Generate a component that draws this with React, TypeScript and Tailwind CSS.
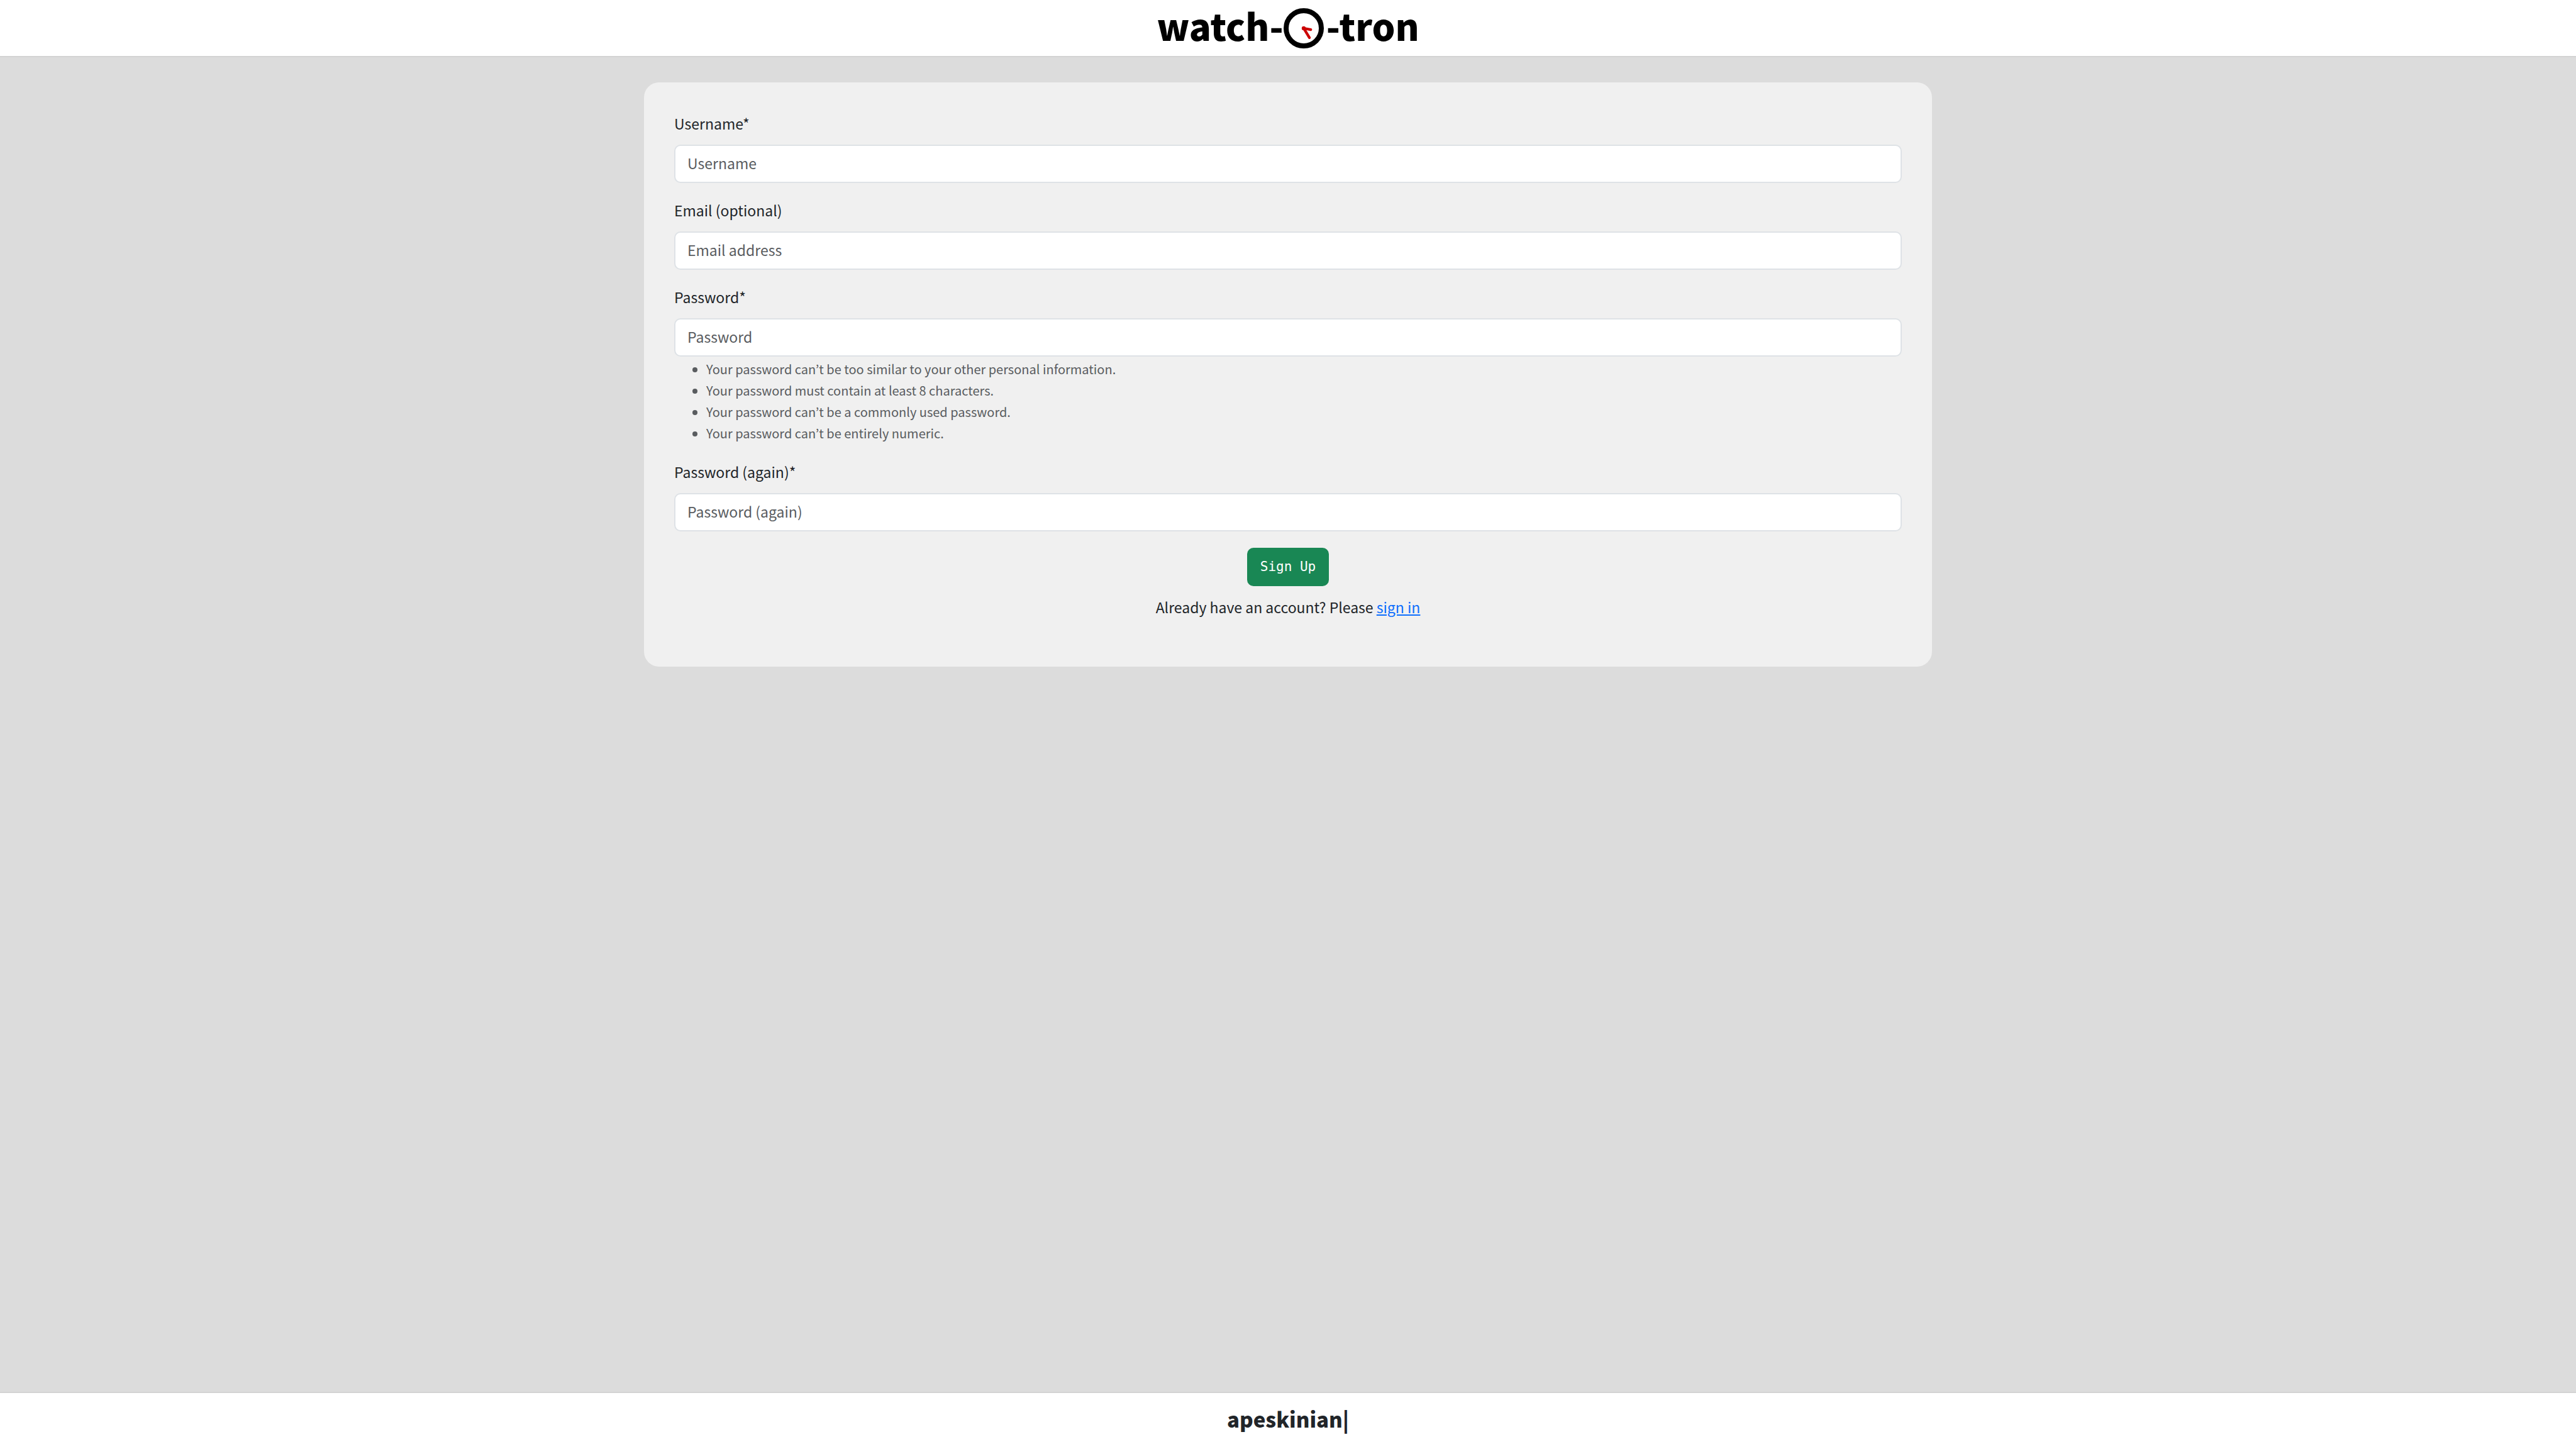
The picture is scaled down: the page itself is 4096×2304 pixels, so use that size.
import type { ReactNode } from "react";

type FieldProps = {
  id: string;
  label: string;
  placeholder: string;
  type: string;
  required?: boolean;
  children?: ReactNode;
};

const passwordRules = [
  "Your password can’t be too similar to your other personal information.",
  "Your password must contain at least 8 characters.",
  "Your password can’t be a commonly used password.",
  "Your password can’t be entirely numeric.",
];

function Field({ id, label, placeholder, type, required, children }: FieldProps) {
  return (
    <div className="mb-[26px] flex flex-col">
      <label htmlFor={id} className="mb-[17px] self-start leading-[34px]">
        {label}
        {required && "*"}
      </label>
      <input
        id={id}
        name={id}
        type={type}
        placeholder={placeholder}
        className="h-[61px] w-full rounded-[10px] border-2 border-[#dee2e6] bg-white px-[19px] pb-1 placeholder:text-[#595c5f]"
      />
      {children}
    </div>
  );
}

function Logo() {
  return (
    <a href="#" className="flex items-start text-[58px] leading-[54px] font-black text-black">
      <span>watch-</span>
      <svg viewBox="0 0 80 80" className="mr-1 size-16" fill="none" aria-hidden="true">
        <circle cx="40" cy="40" r="35" stroke="#000" strokeWidth="10" />
        <circle cx="40" cy="40" r="4" fill="#c00" />
        <path d="M40 40L54 42.7M40 40L51.3 58.6" stroke="#c00" strokeWidth="5.4" strokeLinecap="round" />
      </svg>
      <span>-tron</span>
    </a>
  );
}

export default function App() {
  return (
    <div className="flex min-h-screen flex-col bg-[#dcdcdc] font-['Noto_Sans_CJK_KR',sans-serif] text-[23px] text-[#212529]">
      <header className="flex h-[91px] items-center justify-center border-b-2 border-[#d3d3d3] bg-white">
        <Logo />
      </header>

      <main className="flex-1 pt-10">
        <form className="mx-auto w-1/2 rounded-3xl bg-[#f0f0f0] px-12 pt-12 pb-[78px]">
          <Field id="username" label="Username" placeholder="Username" type="text" required />
          <Field id="email" label="Email (optional)" placeholder="Email address" type="email" />
          <Field id="password1" label="Password" placeholder="Password" type="password" required>
            <ul className="mt-[3px] mb-px list-disc pl-[51px] text-[20px] leading-[34px] text-[#595c5f]">
              {passwordRules.map((rule) => (
                <li key={rule}>{rule}</li>
              ))}
            </ul>
          </Field>
          <Field id="password2" label="Password (again)" placeholder="Password (again)" type="password" required />
          <div className="flex flex-col items-center gap-4">
            <button
              type="submit"
              className="h-[61px] rounded-[10px] bg-[#198754] px-[21px] font-['DejaVu_Sans_Mono',monospace] text-[21px] text-white"
            >
              Sign Up
            </button>
            <p className="leading-[34px]">
              Already have an account? Please{" "}
              <a href="#" className="text-[#0d6efd] underline">
                sign in
              </a>
            </p>
          </div>
        </form>
      </main>

      <footer className="flex h-[91px] items-center justify-center border-t-2 border-[#d3d3d3] bg-white pb-2">
        <a href="#" className="text-[33px] leading-[46px] font-black">
          apeskinian|
        </a>
      </footer>
    </div>
  );
}
